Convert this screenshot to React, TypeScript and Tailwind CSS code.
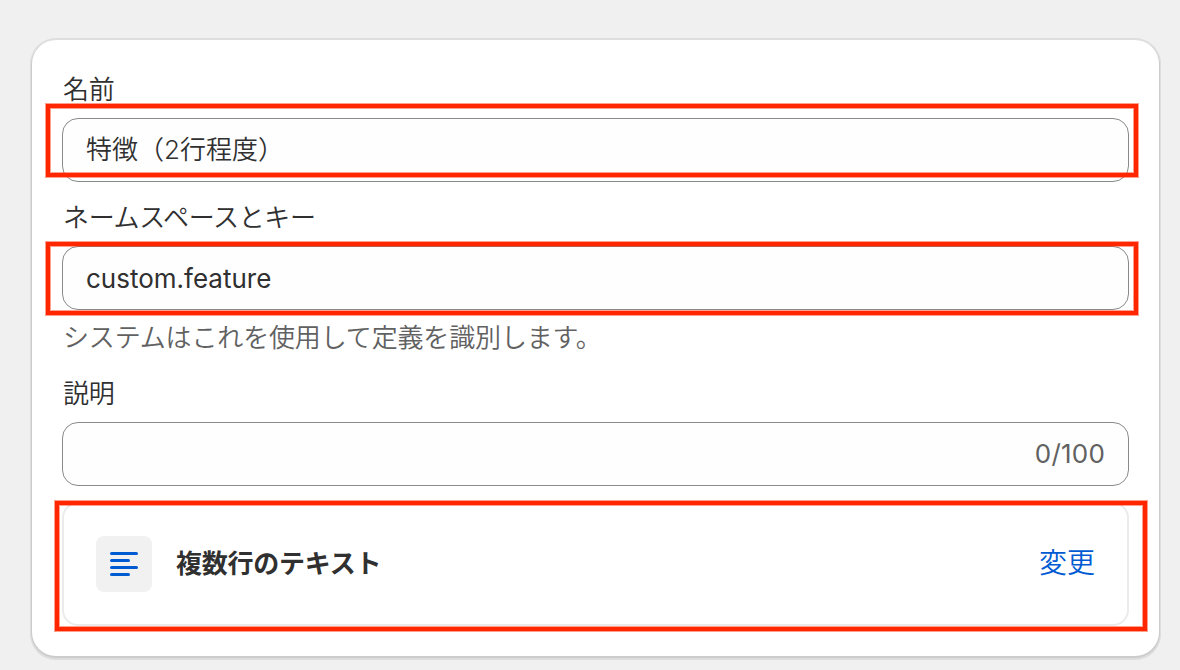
import { ReactNode } from "react";

type FieldProps = {
  label: string;
  children: ReactNode;
};

// label with its bordered input box
function Field({ label, children }: FieldProps) {
  return (
    <div>
      <div className="h-10 pl-px leading-[40px] font-[350] tracking-[-0.35px] whitespace-nowrap">
        {label}
      </div>
      <div className="relative mt-2">{children}</div>
    </div>
  );
}

type InputProps = {
  value: ReactNode;
  suffix?: string;
};

function Input({ value, suffix }: InputProps) {
  return (
    <div className="flex h-16 items-center justify-between rounded-[16px] border border-[#8a8a8a] bg-[#fdfdfd]/50 px-[23px]">
      {value}
      {suffix && (
        <span className="ml-auto pb-0.5 tracking-[0.2px] text-[#616161]">
          {suffix}
        </span>
      )}
    </div>
  );
}

function TextIcon() {
  return (
    <svg
      width="56"
      height="56"
      viewBox="0 0 56 56"
      fill="none"
      stroke="#005bd3"
      strokeWidth="3"
      strokeLinecap="round"
    >
      <path d="M15.5 17.5h25M15.5 24.5h17M15.5 31.5h25M15.5 38.5h17" />
    </svg>
  );
}

export default function App() {
  return (
    <div className="h-[670px] w-[1180px] overflow-hidden bg-[#f0f0f0] pt-10 pl-8 font-[Inter,'Noto_Sans_CJK_JP',sans-serif] text-[26px] text-[#303030]">
      <div className="h-[616px] w-[1127px] rounded-[24px] bg-white pt-[30px] pr-[30px] pl-[30px] shadow-[0_1px_0_1px_#cccccc,0_0_0_2px_#dedede,0_2px_0_2px_#dddddd]">
        <Field label="名前">
          <Input
            value={
              <span className="pb-0.5 font-[350]">特徴（2行程度）</span>
            }
          />
          <div className="absolute -top-[14px] -right-[9px] h-[73px] w-[1092px] border-4 border-[#ff2600] shadow-[0_0_0_1px_#ff260070,inset_0_0_0_1px_#ff260070]" />
        </Field>

        <div className="mt-4">
          <Field label="ネームスペースとキー">
            <Input value={<span>custom.feature</span>} />
            <div className="absolute -top-[4px] -right-[9px] h-[73px] w-[1092px] border-4 border-[#ff2600] shadow-[0_0_0_1px_#ff260070,inset_0_0_0_1px_#ff260070]" />
          </Field>
          <p className="mt-2 h-10 pl-px leading-[40px] font-[350] tracking-[-0.15px] whitespace-nowrap text-[#616161]">
            システムはこれを使用して定義を識別します。
          </p>
        </div>

        <div className="mt-4">
          <Field label="説明">
            <Input value="" suffix="0/100" />
          </Field>
        </div>

        <div className="relative mt-4">
          <div className="flex h-[124px] items-center rounded-[16px] border-2 border-[#ebebeb] px-8">
            <div className="h-14 w-14 rounded-lg bg-[#f1f1f1]">
              <TextIcon />
            </div>
            <span className="ml-6 grow pb-0.5 font-bold tracking-[-0.25px]">
              複数行のテキスト
            </span>
            <button
              type="button"
              className="pb-0.5 text-[28px] font-[350] text-[#005bd3]"
            >
              変更
            </button>
          </div>
          <div className="absolute -top-px -right-[18px] h-[130px] w-[1092px] border-4 border-[#ff2600] shadow-[0_0_0_1px_#ff260070,inset_0_0_0_1px_#ff260070]" />
        </div>
      </div>
    </div>
  );
}
